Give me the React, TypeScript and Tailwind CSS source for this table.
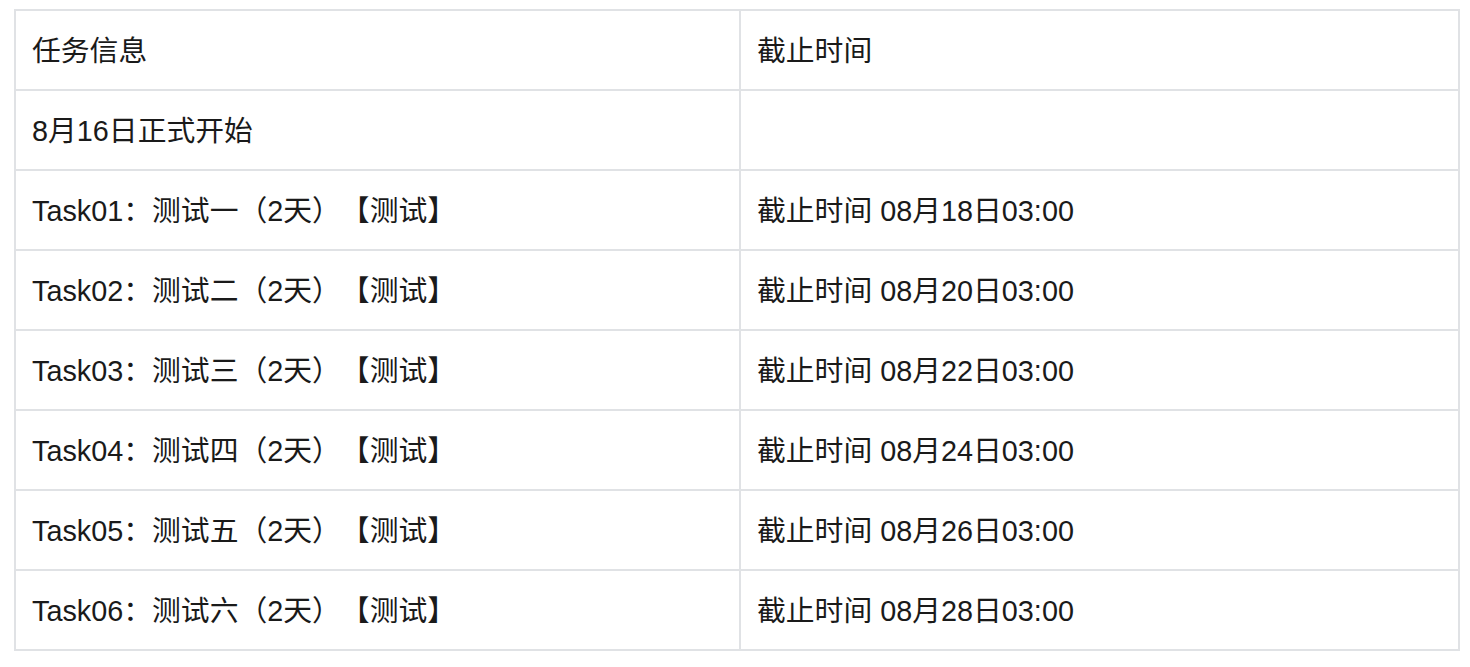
import React from 'react';

const rows: [string, string][] = [
  ['8月16日正式开始', ''],
  ['Task01：测试一（2天）【测试】', '截止时间 08月18日03:00'],
  ['Task02：测试二（2天）【测试】', '截止时间 08月20日03:00'],
  ['Task03：测试三（2天）【测试】', '截止时间 08月22日03:00'],
  ['Task04：测试四（2天）【测试】', '截止时间 08月24日03:00'],
  ['Task05：测试五（2天）【测试】', '截止时间 08月26日03:00'],
  ['Task06：测试六（2天）【测试】', '截止时间 08月28日03:00'],
];

export default function App() {
  return (
    <div
      className="min-h-screen bg-white pt-[9px] pl-[14px] text-[#1a1a1a] [text-spacing-trim:space-all]"
      style={{ fontFamily: '"Liberation Sans", Arial, "Noto Sans CJK SC", sans-serif' }}
    >
      <table className="w-[1446px] table-fixed border-collapse border-2 border-[#e0e2e5] text-[28.8px] leading-none">
        <colgroup>
          <col className="w-[725px]" />
          <col />
        </colgroup>
        <thead>
          <tr className="h-[80px]">
            <th className="border-2 border-[#e0e2e5] pl-[16px] pt-[2px] text-left font-normal">任务信息</th>
            <th className="border-2 border-[#e0e2e5] pl-[16px] pt-[2px] text-left font-normal">截止时间</th>
          </tr>
        </thead>
        <tbody>
          {rows.map(([info, deadline], i) => (
            <tr key={i} className="h-[80px]">
              <td className="border-2 border-[#e0e2e5] pl-[16px] pt-[2px]">{info}</td>
              <td className="border-2 border-[#e0e2e5] pl-[16px] pt-[2px]">{deadline}</td>
            </tr>
          ))}
        </tbody>
      </table>
    </div>
  );
}
